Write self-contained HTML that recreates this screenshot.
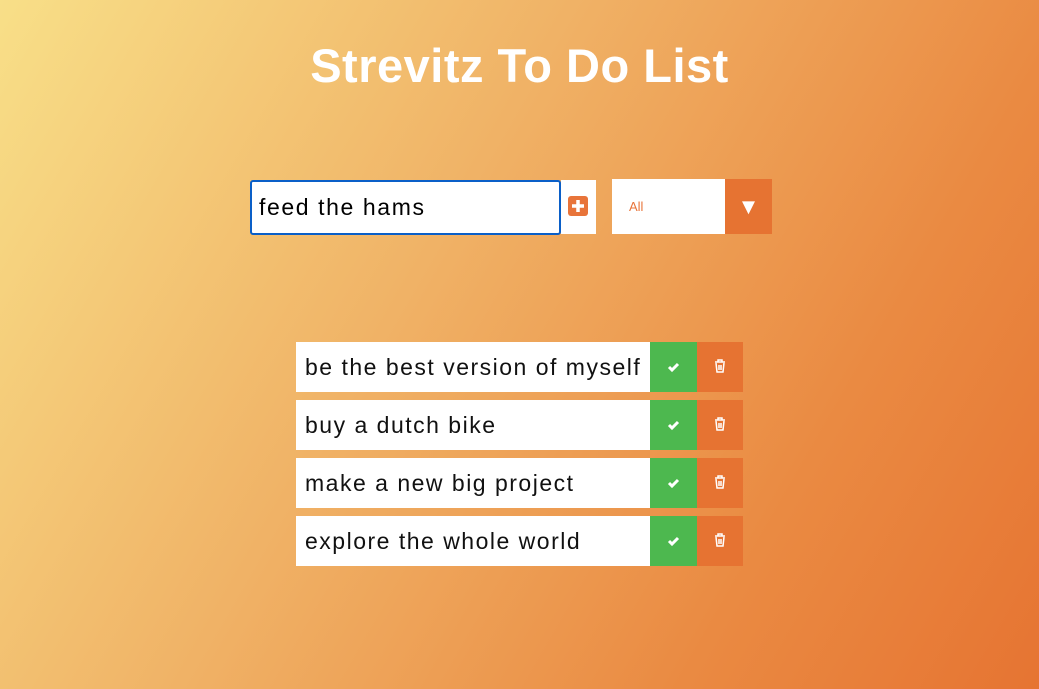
<!DOCTYPE html>
<html><head><style>
html,body{margin:0;width:1039px;height:689px;overflow:hidden}
body{background:linear-gradient(120deg,#f8df88 0%,#f0b266 40%,#ea8a42 75%,#e67432 100%);font-family:"Liberation Sans",sans-serif;position:relative}
h1{position:absolute;top:38px;left:0;width:1039px;text-align:center;margin:0;color:#fff;font-size:47px;font-weight:bold;letter-spacing:0.5px}
.abs{position:absolute}
.input{left:250px;top:180px;height:51px;background:#fff;border:2px solid #0a5fc8;border-radius:3px;font-size:23px;line-height:51px;padding-left:7px;box-sizing:content-box;width:300px;letter-spacing:1.6px}
.plus{left:561px;top:180px;width:35px;height:54px;background:#fff}
.plus div{position:absolute;left:7px;top:16px;width:20px;height:20px;background:#e8743a;border-radius:3px}
.sel{left:612px;top:179px;width:113px;height:55px;background:#fff;color:#e8743a;font-size:13px;line-height:55px;padding-left:17px;box-sizing:border-box}
.arr{left:725px;top:179px;width:47px;height:55px;background:#e67332;color:#fff;font-size:22px;text-align:center;line-height:55px}
.row{left:296px;width:447px;height:50px}
.row .t{position:absolute;left:0;top:0;width:354px;height:50px;background:#fff;font-size:23px;line-height:50px;padding-left:9px;box-sizing:border-box;color:#111;letter-spacing:1.5px;white-space:nowrap;overflow:hidden}
.row .c{position:absolute;left:354px;top:0;width:47px;height:50px;background:#4db84f}
.row .d{position:absolute;left:401px;top:0;width:46px;height:50px;background:#e67332}
</style></head><body>
<h1>Strevitz To Do List</h1>
<div class="abs input">feed the hams</div>
<div class="abs plus"><div><svg width="20" height="20"><path d="M10 4v12M4 10h12" stroke="#fff" stroke-width="3.5"/></svg></div></div>
<div class="abs sel">All</div>
<div class="abs arr">▼</div>
<div class="abs row" style="top:342px"><div class="t">be the best version of myself</div><div class="c"><svg width="47" height="50"><path d="M19 25l3 3 6-6" stroke="#fff" stroke-width="3" fill="none"/></svg></div><div class="d"><svg width="46" height="50"><path d="M18 20h10M21 20v-2h4v2M19 21l1 9h6l1-9M22 23v5M24 23v5" stroke="#fff" stroke-width="1.5" fill="none"/></svg></div></div>
<div class="abs row" style="top:400px"><div class="t">buy a dutch bike</div><div class="c"><svg width="47" height="50"><path d="M19 25l3 3 6-6" stroke="#fff" stroke-width="3" fill="none"/></svg></div><div class="d"><svg width="46" height="50"><path d="M18 20h10M21 20v-2h4v2M19 21l1 9h6l1-9M22 23v5M24 23v5" stroke="#fff" stroke-width="1.5" fill="none"/></svg></div></div>
<div class="abs row" style="top:458px"><div class="t">make a new big project</div><div class="c"><svg width="47" height="50"><path d="M19 25l3 3 6-6" stroke="#fff" stroke-width="3" fill="none"/></svg></div><div class="d"><svg width="46" height="50"><path d="M18 20h10M21 20v-2h4v2M19 21l1 9h6l1-9M22 23v5M24 23v5" stroke="#fff" stroke-width="1.5" fill="none"/></svg></div></div>
<div class="abs row" style="top:516px"><div class="t">explore the whole world</div><div class="c"><svg width="47" height="50"><path d="M19 25l3 3 6-6" stroke="#fff" stroke-width="3" fill="none"/></svg></div><div class="d"><svg width="46" height="50"><path d="M18 20h10M21 20v-2h4v2M19 21l1 9h6l1-9M22 23v5M24 23v5" stroke="#fff" stroke-width="1.5" fill="none"/></svg></div></div>
</body></html>
